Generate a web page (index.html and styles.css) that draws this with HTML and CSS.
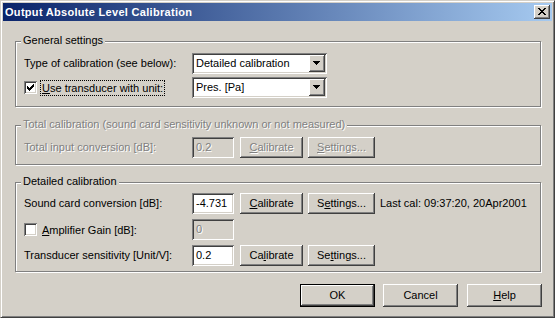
FILE: index.html
```html
<!DOCTYPE html>
<html>
<head>
<meta charset="utf-8">
<link rel="stylesheet" href="styles.css">
</head>
<body>
<div class="window">
  <div class="titlebar">
    <span class="title">Output Absolute Level Calibration</span>
    <span class="close"><svg width="8" height="7" viewBox="0 0 8 7" shape-rendering="crispEdges"><path fill="#000" d="M0 0h2v1H0zM6 0h2v1H6zM1 1h2v1H1zM5 1h2v1H5zM2 2h4v1H2zM3 3h2v1H3zM2 4h4v1H2zM1 5h2v1H1zM5 5h2v1H5zM0 6h2v1H0zM6 6h2v1H6z"/></svg></span>
  </div>
  <div class="content">
    <div class="group g1">
      <div class="legend">General settings</div>
      <div class="rows gap3">
        <div class="row">
          <span class="label">Type of calibration (see below):</span>
          <div class="combo"><span class="combo-text">Detailed calibration</span><span class="combo-btn"><svg width="7" height="4" viewBox="0 0 7 4" shape-rendering="crispEdges"><path fill="#000" d="M0 0h7v1H0zM1 1h5v1H1zM2 2h3v1H2zM3 3h1v1H3z"/></svg></span></div>
        </div>
        <div class="row">
          <div class="label check">
            <span class="checkbox"><svg width="7" height="7" viewBox="0 0 7 7" shape-rendering="crispEdges"><path fill="#000" d="M6 0h1v1H6zM5 1h2v1H5zM0 2h1v1H0zM4 2h3v1H4zM0 3h2v1H0zM3 3h3v1H3zM0 4h5v1H0zM1 5h3v1H1zM2 6h1v1H2z"/></svg></span>
            <span class="check-text focus"><u>U</u>se transducer with unit:</span>
          </div>
          <div class="combo"><span class="combo-text">Pres. [Pa]</span><span class="combo-btn"><svg width="7" height="4" viewBox="0 0 7 4" shape-rendering="crispEdges"><path fill="#000" d="M0 0h7v1H0zM1 1h5v1H1zM2 2h3v1H2zM3 3h1v1H3z"/></svg></span></div>
        </div>
      </div>
    </div>

    <div class="group g2">
      <div class="legend dis">Total calibration (sound card sensitivity unknown or not measured)</div>
      <div class="rows">
        <div class="row">
          <span class="label dis">Total input conversion [dB]:</span>
          <span class="field disabled"><span class="dis">0.2</span></span>
          <span class="btn btn-cal"><span class="dis"><u>C</u>alibrate</span></span>
          <span class="btn btn-set"><span class="dis"><u>S</u>ettings...</span></span>
        </div>
      </div>
    </div>

    <div class="group g3">
      <div class="legend">Detailed calibration</div>
      <div class="rows gap5">
        <div class="row">
          <span class="label">Sound card conversion [dB]:</span>
          <span class="field">-4.731</span>
          <span class="btn btn-cal"><u>C</u>alibrate</span>
          <span class="btn btn-set">S<u>e</u>ttings...</span>
          <span class="lastcal">Last cal: 09:37:20, 20Apr2001</span>
        </div>
        <div class="row">
          <div class="label check">
            <span class="checkbox"></span>
            <span class="check-text"><u>A</u>mplifier Gain [dB]:</span>
          </div>
          <span class="field disabled"><span class="dis">0</span></span>
        </div>
        <div class="row">
          <span class="label">Transducer sensitivity [Unit/V]:</span>
          <span class="field">0.2</span>
          <span class="btn btn-cal">Ca<u>l</u>ibrate</span>
          <span class="btn btn-set">Se<u>t</u>tings...</span>
        </div>
      </div>
    </div>

    <div class="buttons">
      <span class="btn btn-lg default">OK</span>
      <span class="btn btn-lg">Cancel</span>
      <span class="btn btn-lg help"><u>H</u>elp</span>
    </div>
  </div>
</div>
</body>
</html>
```
FILE: styles.css
```css
* { box-sizing: border-box; }
html, body { margin: 0; padding: 0; }
body {
  font-family: "Liberation Sans", Arial, sans-serif;
  font-size: 11px;
  line-height: 13px;
  color: #000;
  background: #d4d0c8;
}
u { text-decoration: underline; text-underline-offset: 1px; }

.window {
  width: 555px;
  height: 318px;
  background: #d4d0c8;
  border: 1px solid;
  border-color: #d4d0c8 #404040 #404040 #d4d0c8;
  box-shadow: inset 1px 1px 0 #fff, inset -1px -1px 0 #808080;
  padding: 2px;
  display: flex;
  flex-direction: column;
}

.titlebar {
  height: 18px;
  flex: none;
  background: linear-gradient(to right, #0a246a, #a6caf0);
  display: flex;
  align-items: center;
  justify-content: space-between;
  padding: 0 2px;
}
.title {
  color: #fff;
  font-weight: bold;
  letter-spacing: 0.3px;
}
.close {
  width: 16px;
  height: 14px;
  background: #d4d0c8;
  box-shadow: inset -1px -1px 0 #404040, inset 1px 1px 0 #fff, inset -2px -2px 0 #808080;
  padding: 3px 0 0 4px;
  display: block;
}
.close svg { display: block; }

.content {
  flex: 1;
  display: flex;
  flex-direction: column;
  padding: 20px 11px 0 12px;
}

.group {
  border: 1px solid #808080;
  box-shadow: 1px 1px 0 #fff, inset 1px 1px 0 #fff;
  padding: 0 8px;
}
.g1 { padding-bottom: 8px; }
.g2 { margin-top: 18px; padding-bottom: 6px; }
.g3 { margin-top: 17px; padding-bottom: 5px; }

.legend {
  width: max-content;
  height: 13px;
  margin: -8px 0 0 -3px;
  padding: 0 2px;
  background: #d4d0c8;
}

.rows { display: flex; flex-direction: column; margin-top: 6px; }
.g3 .rows { margin-top: 5px; }
.gap3 { gap: 3px; }
.gap5 { gap: 5px; }

.row {
  height: 21px;
  display: flex;
  align-items: center;
}
.label { width: 168px; flex: none; white-space: nowrap; }

.dis { color: #808080; text-shadow: 1px 1px 0 #fff; }

.check { display: flex; align-items: center; }
.checkbox {
  width: 13px;
  height: 13px;
  flex: none;
  background: #fff;
  box-shadow: inset 1px 1px 0 #808080, inset -1px -1px 0 #fff, inset 2px 2px 0 #404040, inset -2px -2px 0 #d4d0c8;
  padding: 3px;
}
.checkbox svg { display: block; }
.check-text {
  margin-left: 3px;
  padding: 1px 1px 1px 1px;
  border: 1px solid transparent;
  height: 16px;
  line-height: 12px;
}
.focus { border: 1px dotted #000; padding-right: 1px; }

.combo {
  width: 135px;
  height: 21px;
  background: #fff;
  box-shadow: inset 1px 1px 0 #808080, inset -1px -1px 0 #fff, inset 2px 2px 0 #404040, inset -2px -2px 0 #d4d0c8;
  padding: 2px;
  display: flex;
  align-items: center;
}
.combo-text { flex: 1; padding-left: 2px; }
.combo-btn {
  width: 16px;
  height: 17px;
  background: #d4d0c8;
  box-shadow: inset -1px -1px 0 #404040, inset 1px 1px 0 #fff, inset -2px -2px 0 #808080;
  padding: 6px 0 0 4px;
}
.combo-btn svg { display: block; }

.field {
  width: 42px;
  height: 21px;
  flex: none;
  background: #fff;
  box-shadow: inset 1px 1px 0 #808080, inset -1px -1px 0 #fff, inset 2px 2px 0 #404040, inset -2px -2px 0 #d4d0c8;
  padding-left: 4px;
  display: flex;
  align-items: center;
}
.field.disabled { background: #d4d0c8; }

.btn {
  height: 21px;
  flex: none;
  background: #d4d0c8;
  box-shadow: inset -1px -1px 0 #404040, inset 1px 1px 0 #fff, inset -2px -2px 0 #808080;
  display: flex;
  align-items: center;
  justify-content: center;
}
.btn-cal { width: 63px; margin-left: 6px; }
.btn-set { width: 67px; margin-left: 5px; }
.lastcal { margin-left: 5px; white-space: nowrap; }

.buttons {
  display: flex;
  justify-content: flex-end;
  margin-top: 12px;
  margin-right: -1px;
}
.btn-lg { width: 75px; height: 23px; margin-left: 8px; }
.btn-lg.help { margin-left: 9px; }
.default {
  border: 1px solid #000;
  box-shadow: inset -1px -1px 0 #404040, inset 1px 1px 0 #fff, inset -2px -2px 0 #808080;
}
```
